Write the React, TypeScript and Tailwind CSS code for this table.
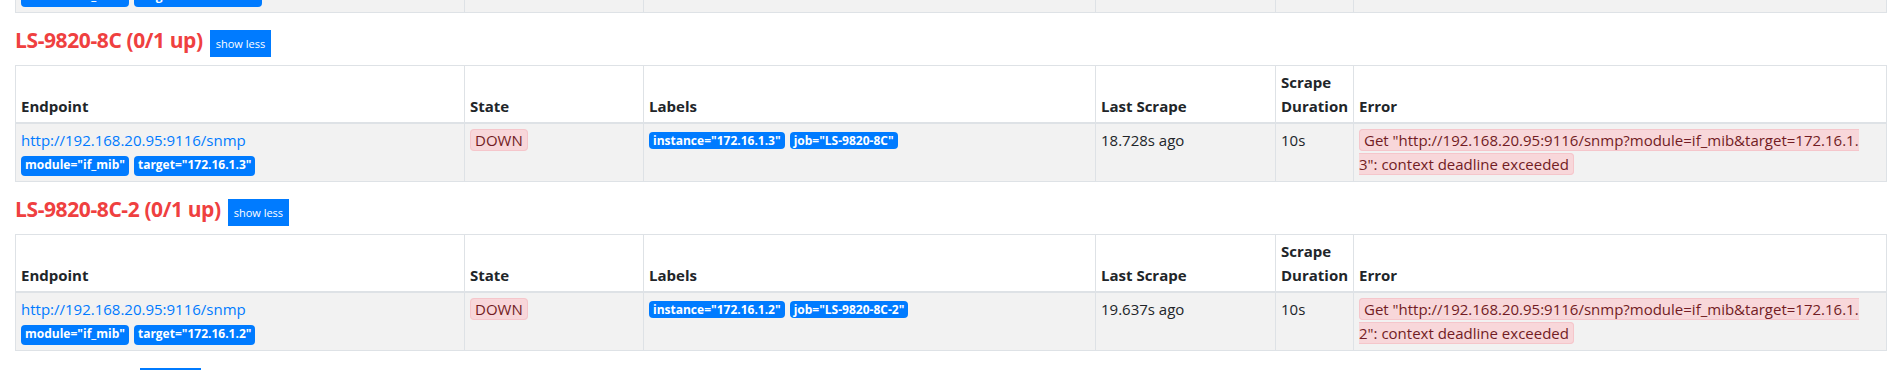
type Target = {
  endpoint: string;
  params: [string, string][];
  state: "UP" | "DOWN";
  labels: [string, string][];
  lastScrape: string;
  duration: string;
  error?: [string, string];
};

type Job = {
  name: string;
  up: string;
  targets: Target[];
};

const prevTarget: Target = {
  endpoint: "http://192.168.20.95:9116/snmp",
  params: [
    ["module", "if_mib"],
    ["target", "172.16.1.13"],
  ],
  state: "UP",
  labels: [
    ["instance", "172.16.1.13"],
    ["job", "LS-9820-8B"],
  ],
  lastScrape: "4.112s ago",
  duration: "1.204s",
};

const jobs: Job[] = [
  {
    name: "LS-9820-8C",
    up: "(0/1 up)",
    targets: [
      {
        endpoint: "http://192.168.20.95:9116/snmp",
        params: [
          ["module", "if_mib"],
          ["target", "172.16.1.3"],
        ],
        state: "DOWN",
        labels: [
          ["instance", "172.16.1.3"],
          ["job", "LS-9820-8C"],
        ],
        lastScrape: "18.728s ago",
        duration: "10s",
        error: [
          'Get "http://192.168.20.95:9116/snmp?module=if_mib&target=172.16.1.',
          '3": context deadline exceeded',
        ],
      },
    ],
  },
  {
    name: "LS-9820-8C-2",
    up: "(0/1 up)",
    targets: [
      {
        endpoint: "http://192.168.20.95:9116/snmp",
        params: [
          ["module", "if_mib"],
          ["target", "172.16.1.2"],
        ],
        state: "DOWN",
        labels: [
          ["instance", "172.16.1.2"],
          ["job", "LS-9820-8C-2"],
        ],
        lastScrape: "19.637s ago",
        duration: "10s",
        error: [
          'Get "http://192.168.20.95:9116/snmp?module=if_mib&target=172.16.1.',
          '2": context deadline exceeded',
        ],
      },
    ],
  },
];

function Badge({ name, value }: { name: string; value: string }) {
  return (
    <span className="inline-block whitespace-nowrap rounded-[4px] bg-[#007bff] px-[4px] text-[12px] font-bold leading-[17px] text-white">
      {name}="{value}"
    </span>
  );
}

function Cols() {
  return (
    <colgroup>
      <col className="w-[449px]" />
      <col className="w-[179px]" />
      <col className="w-[452px]" />
      <col className="w-[180px]" />
      <col className="w-[78px]" />
      <col />
    </colgroup>
  );
}

const td = "border border-[#dee2e6] px-[5px] pt-[4px] pb-[5px] align-top";
const th = "border border-b-2 border-[#dee2e6] px-[5px] py-1 text-left align-bottom font-bold";

function Row({ t }: { t: Target }) {
  return (
    <tr className="bg-[#f2f2f2]">
      <td className={td}>
        <a href="#" className="block text-[#007bff]">
          {t.endpoint}
        </a>
        <div className="flex h-[24px] gap-[5px] pt-[4px]">
          {t.params.map(([k, v]) => (
            <Badge key={k} name={k} value={v} />
          ))}
        </div>
      </td>
      <td className={td}>
        {t.state === "DOWN" ? (
          <span className="rounded-[4px] border border-[#f5c6cb] bg-[#f8d7da] px-[4px] text-[#721c24]">DOWN</span>
        ) : (
          <span className="rounded-[4px] border border-[#c3e6cb] bg-[#d4edda] px-[4px] text-[#155724]">UP</span>
        )}
      </td>
      <td className={td}>
        <div className="flex gap-[5px] pt-[4px]">
          {t.labels.map(([k, v]) => (
            <Badge key={k} name={k} value={v} />
          ))}
        </div>
      </td>
      <td className={td}>{t.lastScrape}</td>
      <td className={td}>{t.duration}</td>
      <td className={td}>
        {t.error && (
          <span className="box-decoration-slice rounded-[4px] border border-[#f5c6cb] bg-[#f8d7da] px-[4px] text-[#721c24]">
            {t.error[0]}
            <br />
            {t.error[1]}
          </span>
        )}
      </td>
    </tr>
  );
}

function JobHeader({ name, up }: { name: string; up: string }) {
  return (
    <div className="mt-[14px] mb-[8px] flex items-baseline gap-[7px]">
      <h2 className="text-[21px] font-bold leading-[27px] tracking-[-0.4px] text-[#ef4040]">
        {name} {up}
      </h2>
      <button className="inline-flex h-[27px] items-center bg-[#007bff] px-[6px] text-[11px] leading-none text-white">
        show less
      </button>
    </div>
  );
}

export default function App() {
  return (
    <div className="min-h-screen bg-white pr-[6px] pl-[15px] font-['Open_Sans',sans-serif] text-[15px] leading-[24px] text-[#212529]">
      {/* tail of the previous job's table */}
      <div className="flex h-[13px] flex-col justify-end overflow-hidden">
        <table className="w-full table-fixed border-collapse border border-[#dee2e6]">
          <Cols />
          <tbody>
            <Row t={prevTarget} />
          </tbody>
        </table>
      </div>

      {jobs.map((job) => (
        <section key={job.name}>
          <JobHeader name={job.name} up={job.up} />
          <table className="w-full table-fixed border-collapse border border-[#dee2e6]">
            <Cols />
            <thead>
              <tr className="bg-white">
                <th className={th}>Endpoint</th>
                <th className={th}>State</th>
                <th className={th}>Labels</th>
                <th className={th}>Last Scrape</th>
                <th className={th}>Scrape Duration</th>
                <th className={th}>Error</th>
              </tr>
            </thead>
            <tbody>
              {job.targets.map((t) => (
                <Row key={t.labels[0][1]} t={t} />
              ))}
            </tbody>
          </table>
        </section>
      ))}

      <JobHeader name="dns" up="(1/1 up)" />
    </div>
  );
}
